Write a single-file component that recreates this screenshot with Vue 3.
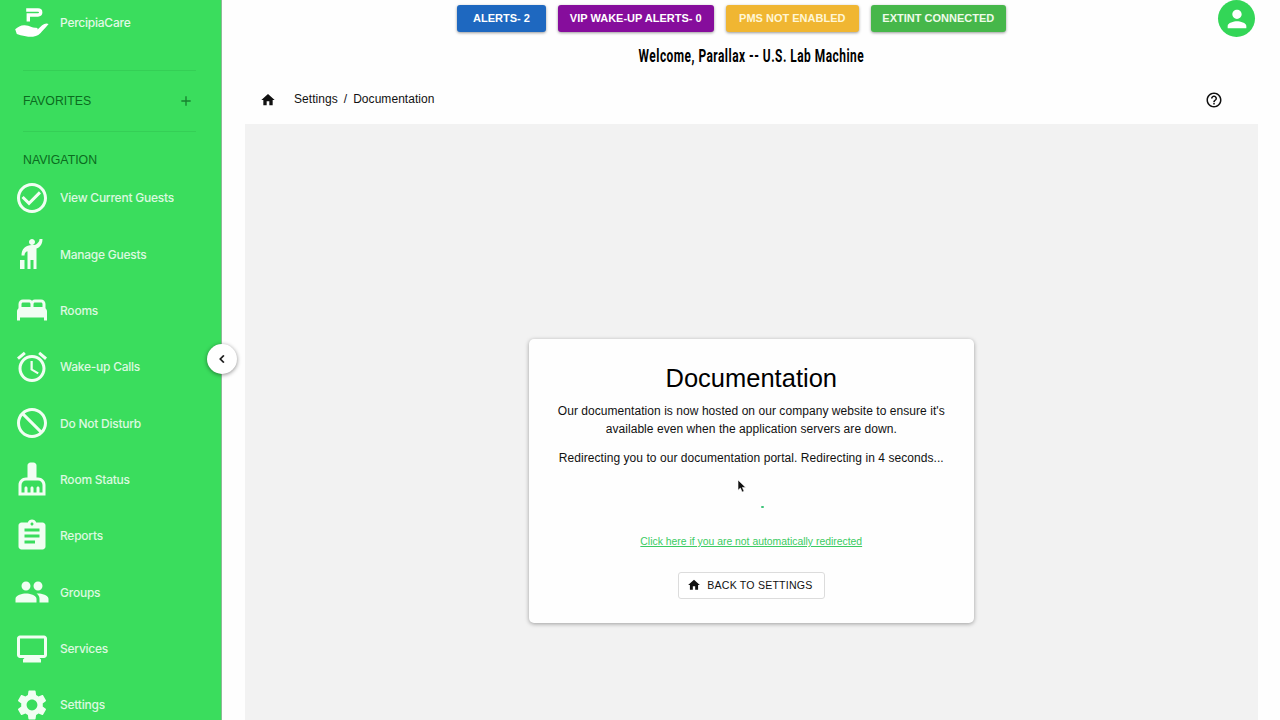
<template>
  <div class="layout">
    <aside class="sidebar">
      <div class="brand">
        <svg class="brand-logo" viewBox="0 0 36 32">
          <path class="brand-letter" d="M12.200 3h11.800q2.700 0 2.700 2.500t-2.700 2.500h-9.700v6.500" />
          <path d="M1.200 22.300Q5 18.500 10 18.200q4-.2 7.500 1.800q1.500.9 4.800.7q1.900.2 1.300 1.800l4.500-4.300q3.200-2.400 6.500-1.300q-3 3.700-6.500 7.300Q25 28.800 19 29.800q-4 .2-8.500-.9q-4-.2-7.700-1.900z" />
        </svg>
        <span class="brand-name">PercipiaCare</span>
      </div>
      <div class="favorites">
        <span class="section-title">FAVORITES</span>
        <svg class="plus" viewBox="0 0 24 24"><path d="M19 13h-6v6h-2v-6H5v-2h6V5h2v6h6v2z" /></svg>
      </div>
      <div class="section-title nav-title">NAVIGATION</div>
      <ul class="nav">
        <li v-for="item in navItems" :key="item.label" class="nav-item">
          <svg class="nav-icon" viewBox="0 0 24 24"><path :d="item.icon" /></svg>
          <span class="nav-label">{{ item.label }}</span>
        </li>
      </ul>
      <button class="collapse">
        <svg viewBox="0 0 24 24"><path d="M15.41 7.41 14 6l-6 6 6 6 1.410-1.410L10.830 12z" /></svg>
      </button>
    </aside>

    <main class="main">
      <header class="topbar">
        <div class="alerts">
          <button v-for="alert in alerts" :key="alert.type" class="alert" :class="alert.type">
            <span>{{ alert.label }}</span>
          </button>
        </div>
        <div class="avatar">
          <svg viewBox="0 0 24 24"><path d="M12 12c2.210 0 4-1.790 4-4s-1.790-4-4-4-4 1.790-4 4 1.790 4 4 4zm0 2c-2.670 0-8 1.340-8 4v2h16v-2c0-2.660-5.330-4-8-4z" /></svg>
        </div>
      </header>
      <div class="welcome"><span>Welcome, Parallax -- U.S. Lab Machine</span></div>
      <div class="breadcrumb">
        <svg class="home" viewBox="0 0 24 24"><path :d="homeIcon" /></svg>
        <span class="crumb">Settings</span>
        <span class="slash">/</span>
        <span class="crumb">Documentation</span>
        <svg class="help" viewBox="0 0 24 24"><path d="M11 18h2v-2h-2v2zm1-16C6.480 2 2 6.480 2 12s4.480 10 10 10 10-4.480 10-10S17.520 2 12 2zm0 18c-4.410 0-8-3.590-8-8s3.590-8 8-8 8 3.590 8 8-3.590 8-8 8zm0-14c-2.210 0-4 1.790-4 4h2c0-1.100.9-2 2-2s2 .9 2 2c0 2-3 1.750-3 5h2c0-2.250 3-2.500 3-5 0-2.210-1.790-4-4-4z" /></svg>
      </div>
      <section class="content">
        <div class="card">
          <h1>Documentation</h1>
          <p class="info">Our documentation is now hosted on our company website to ensure it's<br />available even when the application servers are down.</p>
          <p class="redirect">Redirecting you to our documentation portal. Redirecting in {{ seconds }} seconds...</p>
          <div class="spinner"><i></i></div>
          <a class="link">Click here if you are not automatically redirected</a>
          <button class="back">
            <svg viewBox="0 0 24 24"><path :d="homeIcon" /></svg>
            <span>BACK TO SETTINGS</span>
          </button>
        </div>
      </section>
    </main>

    <svg class="cursor" viewBox="0 0 10 15"><path d="M1 1v10.300l2.400-2.200 1.700 4 2-.9-1.700-3.800h3.300z" /></svg>
  </div>
</template>

<script setup>
import { ref } from 'vue';

const seconds = ref(4);

const homeIcon = 'M10 20v-6h4v6h5v-8h3L12 3 2 12h3v8z';

const alerts = [
  { type: 'info', label: 'ALERTS- 2' },
  { type: 'vip', label: 'VIP WAKE-UP ALERTS- 0' },
  { type: 'warning', label: 'PMS NOT ENABLED' },
  { type: 'success', label: 'EXTINT CONNECTED' },
];

const navItems = [
  {
    label: 'View Current Guests',
    icon: 'M16.59 7.58 10 14.17l-3.59-3.58L5 12l5 5 8-8zM12 2C6.48 2 2 6.48 2 12s4.48 10 10 10 10-4.48 10-10S17.52 2 12 2zm0 18c-4.42 0-8-3.58-8-8s3.58-8 8-8 8 3.58 8 8-3.58 8-8 8z',
  },
  {
    label: 'Manage Guests',
    icon: 'M12 6c-1.1 0-2-.9-2-2s.9-2 2-2 2 .9 2 2-.9 2-2 2zm5-4h2c0 2.7-.93 4.41-2.3 5.5-.5.4-1.1.7-1.7.9V22h-2v-6h-2v6H9V10.1c-.3.1-.5.2-.6.3-.46.36-1.39.9-1.4 2.6H5c0-2.06.35-3.78 2.11-5.29C8.21 6.81 10 6 12 6s2.68-.46 3.48-1.06C15.96 4.55 17 3.76 17 2zM4 16h3v6H4v-6z',
  },
  {
    label: 'Rooms',
    icon: 'M21 10.78V8c0-1.65-1.35-3-3-3h-4c-.77 0-1.47.3-2 .78-.53-.48-1.23-.78-2-.78H6C4.35 5 3 6.35 3 8v2.78c-.61.55-1 1.34-1 2.22v6h2v-2h16v2h2v-6c0-.88-.39-1.67-1-2.22zM14 7h4c.55 0 1 .45 1 1v2h-6V8c0-.55.45-1 1-1zM5 8c0-.55.45-1 1-1h4c.55 0 1 .45 1 1v2H5V8z',
  },
  {
    label: 'Wake-up Calls',
    icon: 'm22 5.72-4.6-3.86-1.29 1.53 4.6 3.86L22 5.72zM7.88 3.39 6.6 1.86 2 5.71l1.29 1.53 4.59-3.85zM12.5 8H11v6l4.75 2.85.75-1.23-4-2.37V8zM12 4c-4.97 0-9 4.03-9 9s4.02 9 9 9c4.97 0 9-4.03 9-9s-4.03-9-9-9zm0 16c-3.87 0-7-3.13-7-7s3.13-7 7-7 7 3.13 7 7-3.13 7-7 7z',
  },
  {
    label: 'Do Not Disturb',
    icon: 'M12 2C6.48 2 2 6.48 2 12s4.48 10 10 10 10-4.48 10-10S17.52 2 12 2zm0 18c-4.42 0-8-3.58-8-8 0-1.85.63-3.55 1.69-4.9L16.9 18.31C15.55 19.37 13.85 20 12 20zm6.31-3.1L7.1 5.69C8.45 4.63 10.15 4 12 4c4.42 0 8 3.58 8 8 0 1.85-.63 3.55-1.69 4.9z',
  },
  {
    label: 'Room Status',
    icon: 'M16 11h-1V3c0-1.1-.9-2-2-2h-2c-1.1 0-2 .9-2 2v8H8c-2.76 0-5 2.24-5 5v7h18v-7c0-2.76-2.24-5-5-5zm3 10h-2v-3c0-.55-.45-1-1-1s-1 .45-1 1v3h-2v-3c0-.55-.45-1-1-1s-1 .45-1 1v3H9v-3c0-.55-.45-1-1-1s-1 .45-1 1v3H5v-5c0-1.65 1.35-3 3-3h8c1.65 0 3 1.35 3 3v5z',
  },
  {
    label: 'Reports',
    icon: 'M19 3h-4.18C14.4 1.84 13.3 1 12 1c-1.3 0-2.4.84-2.82 2H5c-1.1 0-2 .9-2 2v14c0 1.1.9 2 2 2h14c1.1 0 2-.9 2-2V5c0-1.1-.9-2-2-2zm-7 0c.55 0 1 .45 1 1s-.45 1-1 1-1-.45-1-1 .45-1 1-1zm2 14H7v-2h7v2zm3-4H7v-2h10v2zm0-4H7V7h10v2z',
  },
  {
    label: 'Groups',
    icon: 'M16 11c1.66 0 2.99-1.34 2.99-3S17.66 5 16 5c-1.66 0-3 1.34-3 3s1.34 3 3 3zm-8 0c1.66 0 2.99-1.34 2.99-3S9.66 5 8 5C6.34 5 5 6.34 5 8s1.34 3 3 3zm0 2c-2.33 0-7 1.17-7 3.5V19h14v-2.5c0-2.33-4.67-3.5-7-3.5zm8 0c-.29 0-.62.02-.97.05 1.16.84 1.97 1.97 1.97 3.45V19h6v-2.5c0-2.33-4.67-3.5-7-3.5z',
  },
  {
    label: 'Services',
    icon: 'M20 3H4c-1.1 0-2 .9-2 2v11c0 1.1.9 2 2 2h3l-1 1v2h12v-2l-1-1h3c1.1 0 2-.9 2-2V5c0-1.1-.9-2-2-2zm0 13H4V5h16v11z',
  },
  {
    label: 'Settings',
    icon: 'M19.14 12.94c.04-.3.06-.61.06-.94 0-.32-.02-.64-.07-.94l2.03-1.58c.18-.14.23-.41.12-.61l-1.92-3.32c-.12-.22-.37-.29-.59-.22l-2.39.96c-.5-.38-1.03-.7-1.62-.94l-.36-2.54c-.04-.24-.24-.41-.48-.41h-3.84c-.24 0-.43.17-.47.41l-.36 2.54c-.59.24-1.13.57-1.62.94l-2.39-.96c-.22-.08-.47 0-.59.22L2.74 8.87c-.12.21-.08.47.12.61l2.03 1.58c-.05.3-.09.63-.09.94s.02.64.07.94l-2.03 1.58c-.18.14-.23.41-.12.61l1.92 3.32c.12.22.37.29.59.22l2.39-.96c.5.38 1.03.7 1.62.94l.36 2.54c.05.24.24.41.48.41h3.84c.24 0 .44-.17.47-.41l.36-2.54c.59-.24 1.13-.56 1.62-.94l2.39.96c.22.08.47 0 .59-.22l1.92-3.32c.12-.22.07-.47-.12-.61l-2.01-1.58zM12 15.6c-1.98 0-3.6-1.62-3.6-3.6s1.62-3.6 3.6-3.6 3.6 1.62 3.6 3.6-1.62 3.6-3.6 3.6z',
  },
];
</script>

<style>
body {
  overflow: hidden;
  background: #fefefe;
}
</style>

<style scoped>
.layout {
  display: flex;
  width: 1280px;
  height: 720px;
  position: relative;
  font-family: "Liberation Sans", Arial, sans-serif;
  color: #111;
  white-space: nowrap;
}

svg {
  display: block;
  flex: none;
  fill: currentColor;
}

button {
  font-family: inherit;
  margin: 0;
  padding: 0;
  border: none;
}

.sidebar {
  position: relative;
  flex: none;
  box-sizing: border-box;
  width: 222px;
  height: 720px;
  background: #3add5d;
  border-right: 1px solid #8fb898;
}

.brand {
  display: flex;
  align-items: center;
  height: 45px;
  padding-left: 14px;
  color: white;
}

.brand-logo {
  width: 36px;
  height: 32px;
}

.brand-letter {
  fill: none;
  stroke: currentColor;
  stroke-width: 3.4;
}

.brand-name {
  margin-left: 10px;
  font-family: Inter, sans-serif;
  font-size: 12px;
  font-weight: 500;
  letter-spacing: -0.24px;
  opacity: 0.85;
}

.favorites {
  display: flex;
  align-items: center;
  justify-content: space-between;
  box-sizing: border-box;
  height: 62px;
  width: 173px;
  margin: 25px 0 0 23px;
  padding-right: 2.5px;
  border-top: 1px solid #35cf56;
  border-bottom: 1px solid #35cf56;
}

.section-title {
  font-size: 12.3px;
  color: #0b6b20;
}

.plus {
  width: 16px;
  height: 16px;
  color: #17812f;
}

.nav-title {
  height: 16px;
  line-height: 16px;
  margin: 20px 0 0 23px;
}

.nav {
  list-style: none;
  margin: 1.5px 0 0;
  padding: 0;
  height: 550px;
  overflow: hidden;
}

.nav-item {
  display: flex;
  align-items: center;
  height: 56.36px;
  padding-left: 13.5px;
  color: #f1fef3;
}

.nav-icon {
  width: 36px;
  height: 36px;
}

.nav-label {
  margin-left: 10.5px;
  font-family: Inter, sans-serif;
  font-size: 12px;
  font-weight: 500;
  letter-spacing: -0.24px;
  opacity: 0.88;
}

.collapse {
  position: absolute;
  left: 206.5px;
  top: 344px;
  display: flex;
  align-items: center;
  justify-content: center;
  width: 30px;
  height: 30px;
  border-radius: 50%;
  background: white;
  color: #111;
  box-shadow: 0 1px 4px rgba(0, 0, 0, 0.45);
}

.collapse svg {
  width: 16px;
  height: 16px;
  stroke: currentColor;
  stroke-width: 0.5;
}

.main {
  flex: 1;
  display: flex;
  flex-direction: column;
}

.topbar {
  display: flex;
  justify-content: space-between;
  height: 38px;
  padding: 0 25px 0 235px;
}

.alerts {
  display: flex;
  align-items: flex-start;
  gap: 12px;
  padding-top: 5.4px;
}

.alert {
  height: 27px;
  padding-bottom: 1px;
  border-radius: 3px;
  color: white;
  font-size: 11px;
  font-weight: bold;
  box-shadow: 0 1px 3px rgba(0, 0, 0, 0.4);
}

.info.alert {
  width: 89px;
  background: #1e68c0;
}

.vip {
  width: 155.5px;
  background: #860d9c;
}

.warning {
  width: 133.5px;
  background: #f0b632;
  color: #fff6d6;
}

.success {
  width: 134.5px;
  background: #46b74a;
  color: #effbe9;
}

.avatar {
  display: flex;
  align-items: center;
  justify-content: center;
  width: 37px;
  height: 37px;
  border-radius: 50%;
  background: #33d657;
  color: white;
}

.avatar svg {
  width: 28px;
  height: 28px;
}

.welcome {
  display: flex;
  justify-content: center;
  height: 36px;
  line-height: 36px;
  font-family: Roboto, sans-serif;
  font-size: 17.5px;
  font-weight: bold;
  letter-spacing: 0.7px;
  color: black;
}

/* condensed headline */
.welcome span {
  transform: scaleX(0.682);
}

.breadcrumb {
  display: flex;
  align-items: center;
  height: 50px;
  padding-left: 37.5px;
  font-size: 12px;
  letter-spacing: 0.05px;
}

.home {
  width: 16px;
  height: 16px;
  margin: 1px 18.5px 0 0;
}

.slash {
  margin: 0 6px;
}

.help {
  width: 18px;
  height: 18px;
  margin: 1px 57px 0 auto;
}

.content {
  flex: 1;
  display: flex;
  justify-content: center;
  align-items: flex-start;
  margin: 0 22px 0 22.5px;
  background: #f2f2f2;
}

.card {
  display: flex;
  flex-direction: column;
  align-items: center;
  box-sizing: border-box;
  width: 445px;
  height: 284px;
  margin-top: 215px;
  border-radius: 5px;
  background: #fefefe;
  text-align: center;
  box-shadow: 0 1px 4px rgba(0, 0, 0, 0.35);
}

h1 {
  margin: 23px 0 0;
  font-size: 25.5px;
  line-height: 32px;
  font-weight: normal;
  color: black;
}

p {
  margin: 0;
  font-size: 12px;
  line-height: 18px;
  letter-spacing: 0.055px;
}

p.info {
  margin-top: 8px;
}

.redirect {
  margin-top: 11px;
}

.spinner {
  width: 26px;
  height: 40px;
  margin-top: 18px;
}

.spinner i {
  display: block;
  width: 3px;
  height: 2px;
  margin: 21px 0 0 23px;
  border-radius: 1px;
  background: #3fc47a;
}

.link {
  margin-top: 8px;
  padding-top: 1px;
  font-size: 10.4px;
  line-height: 16px;
  color: #3bcb62;
  text-decoration: underline;
}

.back {
  display: flex;
  align-items: center;
  box-sizing: border-box;
  width: 147px;
  height: 27px;
  margin-top: 22px;
  padding: 0 0 1px 8.5px;
  border: 1px solid #dcdcdc;
  border-radius: 3px;
  background: white;
  color: #111;
  font-size: 10.6px;
  letter-spacing: 0.2px;
}

.back svg {
  width: 14px;
  height: 14px;
  margin-right: 6px;
}

.cursor {
  position: absolute;
  left: 737px;
  top: 479px;
  width: 10px;
  height: 15px;
  stroke: white;
  stroke-width: 0.6;
}
</style>
